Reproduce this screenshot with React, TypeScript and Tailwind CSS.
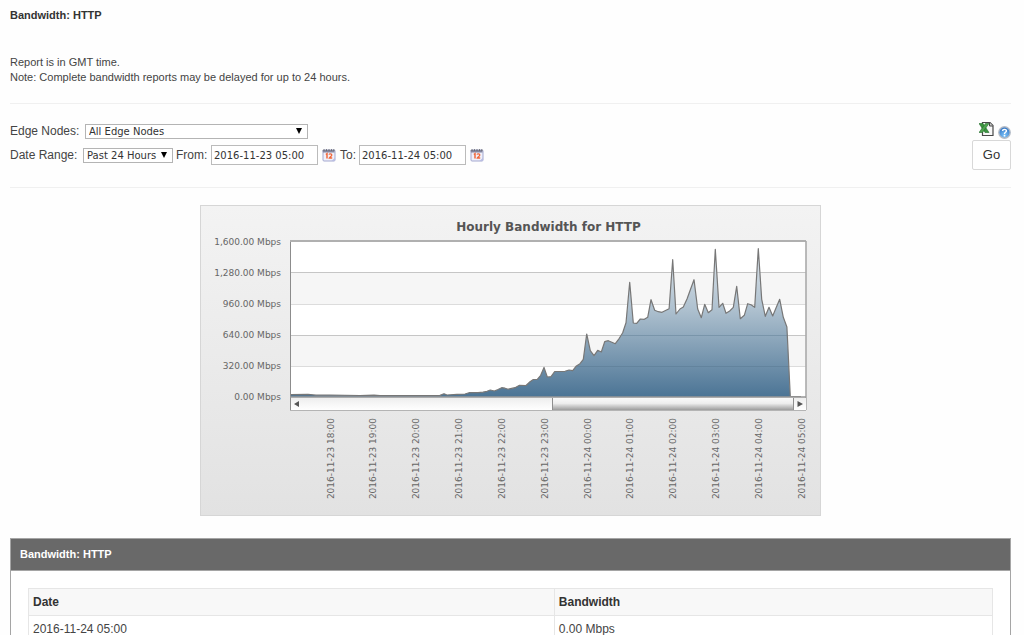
import React from "react";

const areaPoints: [number, number][] = [
  [291, 394.7], [308, 394.4], [316, 395.2], [330, 395.2], [360, 395.5], [374, 395.2], [380, 395.6], [437, 395.6],
  [440, 395.4], [444, 393.7], [447, 395], [457, 394.3], [465, 394], [469, 392.7], [478, 392.7], [483, 392.2],
  [487, 391.3], [490.3, 390], [494.3, 391], [498, 389.5], [501.7, 387.7], [505, 388.2], [508.3, 389.2], [515, 387.7],
  [519.5, 385.3], [526, 385.5], [530, 381.7], [533.3, 379.5], [537.3, 379.3], [540.7, 375.3], [544, 367.4],
  [547.3, 377], [551, 376.7], [554.7, 371.5], [565, 371.3], [569, 370], [572.7, 370.7], [576, 366.3], [580, 363.7],
  [583.3, 359.3], [586.7, 334], [590.3, 350.7], [594, 355.7], [597.7, 350.3], [601.3, 352], [604.7, 341.7],
  [608.3, 340.7], [615.3, 343.7], [619.3, 338.3], [622.7, 332.7], [626, 322.7], [629.7, 282.3], [633.3, 323],
  [636.7, 323.3], [640.3, 319], [644.3, 319.3], [647.7, 317.3], [651, 299.7], [654.7, 310.3], [658.3, 311.7],
  [662, 312.3], [669.1, 308.7], [672.7, 259.7], [676, 314], [680, 309], [683.3, 307], [687, 299], [694, 279.7],
  [697.7, 309], [701.3, 317.7], [704.7, 304.3], [708.3, 312.7], [712, 309.7], [715.3, 249.3], [719, 307.3],
  [722.7, 303.3], [726, 313.3], [729.7, 311], [733.3, 307.3], [736.7, 286.3], [740.3, 318.7], [744.3, 315.3],
  [747.7, 303.7], [751, 304.7], [754.7, 307.3], [758.3, 248.7], [761.7, 299.3], [765.3, 316.3], [769, 307.3],
  [772.7, 316], [776, 308], [779.7, 299.3], [783.3, 317.3], [786.9, 327], [790.3, 396.5], [801, 396.5],
];

const line = areaPoints.map(([x, y]) => `${x},${y}`).join(" ");

const yLabels = ["1,600.00", "1,280.00", "960.00", "640.00", "320.00", "0.00"];

const xLabels = [
  "2016-11-23 18:00", "2016-11-23 19:00", "2016-11-23 20:00", "2016-11-23 21:00",
  "2016-11-23 22:00", "2016-11-23 23:00", "2016-11-24 00:00", "2016-11-24 01:00",
  "2016-11-24 02:00", "2016-11-24 03:00", "2016-11-24 04:00", "2016-11-24 05:00",
];

const rows = [
  ["2016-11-24 05:00", "0.00 Mbps"],
];

function BandwidthChart() {
  return (
    <svg
      width="621"
      height="311"
      viewBox="200 205 621 311"
      className="max-w-full font-['DejaVu_Sans',sans-serif]"
      role="img"
      aria-label="Hourly Bandwidth for HTTP"
    >
      <defs>
        <linearGradient id="card" x1="0" y1="0" x2="0" y2="1">
          <stop offset="0" stopColor="#f3f3f3" />
          <stop offset="1" stopColor="#e2e2e2" />
        </linearGradient>
        <linearGradient id="area" gradientUnits="userSpaceOnUse" x1="0" y1="248" x2="0" y2="397">
          <stop offset="0" stopColor="#dfe6ec" />
          <stop offset="0.4" stopColor="#b0c2d0" />
          <stop offset="1" stopColor="#4b7495" />
        </linearGradient>
        <linearGradient id="track" x1="0" y1="0" x2="0" y2="1">
          <stop offset="0" stopColor="#eeeeee" />
          <stop offset="1" stopColor="#ffffff" />
        </linearGradient>
        <linearGradient id="thumb" x1="0" y1="0" x2="0" y2="1">
          <stop offset="0" stopColor="#fafafa" />
          <stop offset="0.45" stopColor="#ededed" />
          <stop offset="1" stopColor="#9c9c9c" />
        </linearGradient>
      </defs>

      <rect x="200.5" y="205.5" width="620" height="310" fill="url(#card)" stroke="#d6d6d6" />
      <text x="548.5" y="231" textAnchor="middle" fontSize="12" fontWeight="700" fill="#555">
        Hourly Bandwidth for HTTP
      </text>

      <rect x="291" y="241" width="515" height="156" fill="#fff" />
      <rect x="291" y="273" width="515" height="31" fill="#f6f6f6" />
      <rect x="291" y="335" width="515" height="31" fill="#f6f6f6" />
      <path d="M291 272.5H806M291 335.5H806" stroke="#c6c6c6" />
      <path d="M291 304.5H806M291 366.5H806" stroke="#dcdcdc" />

      <polygon points={`291,397 ${line} 801,397`} fill="url(#area)" />
      <path d="M622 335.5H787M576 366.5H789" stroke="#4f6f88" strokeOpacity="0.35" />
      <polyline points={line} fill="none" stroke="#777" strokeWidth="1.2" strokeLinejoin="round" />

      <path d="M290.5 410V240.5" stroke="#8c8c8c" />
      <path d="M290 241H806" stroke="#b0b0b0" strokeWidth="2" />
      <path d="M806 241V410" stroke="#aaa" strokeWidth="1.6" />
      <path d="M290 397H806" stroke="#999" strokeWidth="1.4" />

      <rect x="291" y="398" width="515" height="12" fill="url(#track)" />
      <rect x="552" y="398" width="242" height="12" fill="url(#thumb)" />
      <path d="M552.5 398V410M793.5 398V410" stroke="#8e8e8e" />
      <path d="M290 410.5H806" stroke="#b4b4b4" />
      <path d="M299 401V407L294 404Z M797.5 401V407L803 404Z" fill="#555" />

      {yLabels.map((label, i) => (
        <text key={label} x="281" y={245 + i * 31} textAnchor="end" fontSize="9" fill="#666">
          {`${label} Mbps`}
        </text>
      ))}
      {xLabels.map((label, i) => {
        const x = Math.round(333.5 + i * 42.85);
        return (
          <text key={label} x={x} y="418" textAnchor="end" fontSize="9" fill="#666" transform={`rotate(-90 ${x} 418)`}>
            {label}
          </text>
        );
      })}
    </svg>
  );
}

function CalendarIcon() {
  return (
    <svg width="14" height="14" viewBox="0 0 14 14" aria-hidden="true">
      <rect x="1" y="2" width="12" height="11" rx="1" fill="#f0f0fa" stroke="#a3a8d0" />
      <path d="M0.5 2H12.5V4.5H1Z" fill="#8486a0" />
      <path d="M2 1V3M4.5 1V3M7 1V3M9.5 1V3M11.8 1V3" stroke="#666" strokeWidth="0.8" />
      <path d="M3.800 6.500L5 5.700V10.500" fill="none" stroke="#f0683c" strokeWidth="1.500" />
      <path d="M7 6.600C7.400 5.500 9.800 5.500 9.800 7C9.800 8.300 7.800 8.800 7.300 10H10.200" fill="none" stroke="#f0683c" strokeWidth="1.300" />
      <path d="M9.5 13L13 9.8V13Z" fill="#b9bde2" />
    </svg>
  );
}

function ExcelIcon() {
  return (
    <svg width="15" height="16" viewBox="0 0 15 16" aria-hidden="true">
      <path d="M3.500 1.500H11L14 4.500V14.500H3.500Z" fill="#f8f8f8" stroke="#484848" strokeWidth="1.2" />
      <path d="M10.500 1.500V5H14" fill="#ccc" stroke="#484848" />
      <path d="M0 2.500H4L10 11.500H6Z" fill="#3d9440" stroke="#226d2b" strokeWidth="0.6" />
      <path d="M6.500 2.500H10L3.500 11.500H0Z" fill="#4fa350" stroke="#226d2b" strokeWidth="0.6" />
    </svg>
  );
}

function HelpIcon() {
  return (
    <svg width="13" height="13" viewBox="0 0 13 13" aria-hidden="true">
      <defs>
        <radialGradient id="help" cx="0.5" cy="0.75" r="0.7">
          <stop offset="0" stopColor="#7cc4fa" />
          <stop offset="1" stopColor="#3475c4" />
        </radialGradient>
      </defs>
      <circle cx="6.500" cy="6.500" r="5.700" fill="url(#help)" stroke="#b5bcc6" strokeWidth="1.400" />
      <path d="M4.600 5.100C4.600 2.700 8.500 2.800 8.400 5C8.300 6.300 6.500 6.300 6.500 7.900" fill="none" stroke="#fff" strokeWidth="1.400" />
      <circle cx="6.500" cy="9.700" r="0.900" fill="#fff" />
    </svg>
  );
}

function Picker({ id, label, className }: { id: string; label: string; className: string }) {
  return (
    <span className={`relative flex ${className}`}>
      <select
        id={id}
        className="h-[15px] w-full appearance-none border border-[#b4b4b4] bg-white pl-[3px] font-['DejaVu_Sans',sans-serif] text-[10px] leading-[13px] text-[#333]"
      >
        <option>{label}</option>
      </select>
      <svg width="6" height="6" viewBox="0 0 6 6" className="pointer-events-none absolute top-1 right-[6px]" aria-hidden="true">
        <path d="M0 0H6L3 6Z" fill="#000" />
      </svg>
    </span>
  );
}

function DateField({ id, value }: { id: string; value: string }) {
  return (
    <>
      <input
        id={id}
        type="text"
        defaultValue={value}
        className="ml-[3px] h-5 w-[107px] border border-[#bbb] bg-white px-[2px] font-['DejaVu_Sans',sans-serif] text-[10px] text-[#333]"
      />
      <button type="button" aria-label="Choose date" className="ml-1">
        <CalendarIcon />
      </button>
    </>
  );
}

export default function App() {
  return (
    <main className="min-h-screen bg-[#fefefe] pr-[13px] pl-[10px] font-['Liberation_Sans',Arial,sans-serif] text-xs text-[#444]">
      <h1 className="pt-2 text-[11px] leading-[15px] font-bold text-[#333]">Bandwidth: HTTP</h1>

      <p className="mt-8 text-[11px] leading-[15px]">
        Report is in GMT time.
        <br />
        Note: Complete bandwidth reports may be delayed for up to 24 hours.
      </p>

      <form
        className="mt-[18px] flex justify-between border-y border-[#f0f0f0] py-[17px]"
        onSubmit={(event) => event.preventDefault()}
      >
        <div className="flex flex-col gap-[3px]">
          <div className="flex h-5 items-center">
            <label htmlFor="nodes" className="w-[75px]">Edge Nodes:</label>
            <Picker id="nodes" label="All Edge Nodes" className="w-[223px]" />
          </div>
          <div className="flex h-[22px] items-center">
            <label htmlFor="range" className="w-[73px]">Date Range:</label>
            <Picker id="range" label="Past 24 Hours" className="w-[90px]" />
            <label htmlFor="from" className="ml-[3px] w-8">From:</label>
            <DateField id="from" value="2016-11-23 05:00" />
            <label htmlFor="to" className="ml-1 w-4">To:</label>
            <DateField id="to" value="2016-11-24 05:00" />
          </div>
        </div>
        <div className="flex flex-col items-end">
          <div className="flex h-[19px] items-end gap-1 pb-px">
            <button type="button" aria-label="Export to Excel" className="mb-[2px]">
              <ExcelIcon />
            </button>
            <button type="button" aria-label="Help">
              <HelpIcon />
            </button>
          </div>
          <button type="submit" className="h-[30px] w-[39px] rounded-xs border border-[#d8d8d8] bg-white text-[13px] text-[#333]">
            Go
          </button>
        </div>
      </form>

      <div className="mt-[17px] flex justify-center">
        <BandwidthChart />
      </div>

      <section className="mt-[22px] border border-[#a5a5a5] bg-white">
        <h2 className="border-b border-[#a5a5a5] bg-[#696969] px-[9px] py-2 text-[11px] leading-[15px] font-bold text-white">
          Bandwidth: HTTP
        </h2>
        <div className="px-[17px] pt-[17px] pb-5">
          <table className="w-full border-collapse text-left">
            <thead>
              <tr className="bg-[#f8f8f8] text-[#333]">
                <th scope="col" className="w-6/11 border border-[#e6e6e6] px-1 py-1 leading-[18px]">Date</th>
                <th scope="col" className="border border-[#e6e6e6] px-1 py-1 leading-[18px]">Bandwidth</th>
              </tr>
            </thead>
            <tbody>
              {rows.map(([date, value]) => (
                <tr key={date}>
                  <td className="border border-[#e6e6e6] px-1 py-1 leading-[18px]">{date}</td>
                  <td className="border border-[#e6e6e6] px-1 py-1 leading-[18px]">{value}</td>
                </tr>
              ))}
            </tbody>
          </table>
        </div>
      </section>
    </main>
  );
}
